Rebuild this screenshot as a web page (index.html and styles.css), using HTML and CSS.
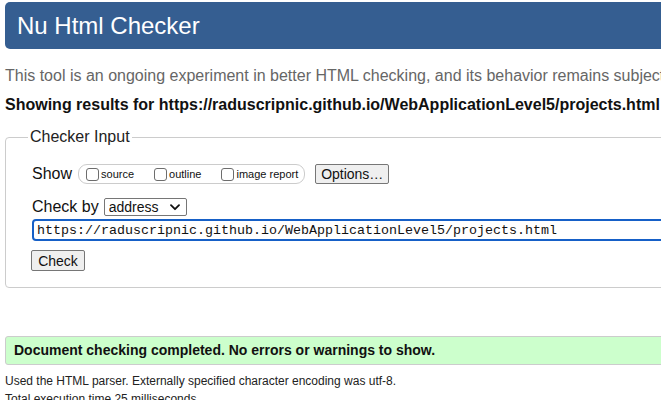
FILE: index.html
```html
<!DOCTYPE html>
<html lang="en">
<head>
<meta charset="utf-8">
<title>Nu Html Checker</title>
<link rel="stylesheet" href="styles.css">
</head>
<body>
<div class="page">
  <header class="banner"><h1 class="title">Nu Html Checker</h1></header>
  <p class="intro">This tool is an ongoing experiment in better HTML checking, and its behavior remains subject to change</p>
  <p class="results">Showing results for https://raduscripnic.github.io/WebApplicationLevel5/projects.html</p>
  <form class="form">
    <fieldset class="fs">
      <legend class="legend">Checker Input</legend>
      <div class="rows">
        <div class="row">
          <span class="lbl">Show</span>
          <span class="pill">
            <label class="opt"><input type="checkbox" class="cb">source</label>
            <label class="opt"><input type="checkbox" class="cb">outline</label>
            <label class="opt"><input type="checkbox" class="cb">image report</label>
          </span>
          <button type="button" class="btn btn-opt">Options…</button>
        </div>
        <div class="row row-by">
          <span class="lbl">Check by</span>
          <span class="sel">
            <select class="sel-in"><option>address</option></select>
            <svg class="chev" width="10" height="7" viewBox="0 0 10 7"><path d="M1 1.2 L5 5.2 L9 1.2" fill="none" stroke="#111" stroke-width="1.8" stroke-linecap="round" stroke-linejoin="round"/></svg>
          </span>
        </div>
        <div class="row row-url">
          <input class="url" type="text" value="https://raduscripnic.github.io/WebApplicationLevel5/projects.html">
        </div>
        <div class="row row-check">
          <button type="button" class="btn btn-check">Check</button>
        </div>
      </div>
    </fieldset>
  </form>
  <p class="success">Document checking completed. No errors or warnings to show.</p>
  <p class="stats">Used the HTML parser. Externally specified character encoding was utf-8.</p>
  <p class="stats stats2">Total execution time 25 milliseconds.</p>
</div>
</body>
</html>
```
FILE: styles.css
```css
html { overflow: hidden; }
body {
  margin: 0;
  font-family: "Liberation Sans", Arial, Helvetica, sans-serif;
  color: #111;
  background: #fff;
}
.page {
  width: 760px;
  padding: 2px 0 0 5px;
}
.banner {
  height: 47px;
  background: #355e91;
  border-radius: 5px 0 0 5px;
  padding-left: 12px;
}
.title {
  margin: 0;
  font-size: 24px;
  font-weight: normal;
  line-height: 47px;
  color: #fff;
}
.intro {
  margin: 17px 0 0;
  font-size: 16px;
  line-height: 20px;
  color: #666;
  white-space: nowrap;
}
.results {
  margin: 9px 0 0;
  font-size: 16px;
  line-height: 20px;
  font-weight: bold;
  white-space: nowrap;
}
.form { margin: 12px 0 0; }
.fs {
  margin: 0;
  border: 1px solid #ccc;
  border-radius: 4px;
  padding: 0 0 16px 26px;
}
.legend {
  margin-left: -4px;
  padding: 0 2px;
  font-size: 16px;
  line-height: 20px;
  color: #222;
}
.rows {
  display: flex;
  flex-direction: column;
  padding-top: 17px;
}
.row {
  display: flex;
  align-items: center;
}
.lbl {
  font-size: 16px;
  line-height: 20px;
  color: #111;
}
.pill {
  display: inline-flex;
  align-items: center;
  gap: 17px;
  height: 18px;
  margin-left: 6px;
  padding: 0 6px 0 4px;
  border: 1px solid #ccc;
  border-radius: 9px;
}
.opt {
  display: inline-flex;
  align-items: center;
  font-size: 11px;
  color: #111;
}
.cb {
  -webkit-appearance: none;
  appearance: none;
  width: 13px;
  height: 13px;
  margin: 0 2px 0 3px;
  border: 1px solid #6d6d6d;
  border-radius: 3px;
  background: #fff;
}
.btn {
  font-family: "Liberation Sans", Arial, sans-serif;
  font-size: 14px;
  color: #111;
  background: #efefef;
  border: 1px solid #767676;
  border-radius: 2px;
  padding: 0;
}
.btn-opt {
  width: 74px;
  height: 20px;
  margin-left: 10px;
}
.row-by { margin-top: 13px; }
.sel {
  display: inline-flex;
  align-items: center;
  width: 83px;
  height: 18px;
  box-sizing: border-box;
  margin-left: 5px;
  border: 1px solid #767676;
  border-radius: 2px;
  background: #fff;
}
.sel-in {
  -webkit-appearance: none;
  appearance: none;
  flex: 1;
  border: 0;
  background: transparent;
  font-family: "Liberation Sans", Arial, sans-serif;
  font-size: 14px;
  color: #111;
  padding: 0 0 0 4px;
  height: 16px;
  line-height: 16px;
  outline: none;
}
.chev { margin-right: 6px; flex: none; }
.row-url { margin-top: 2px; }
.url {
  width: 700px;
  height: 22px;
  box-sizing: border-box;
  border: 2px solid #1660c7;
  border-radius: 4px;
  padding: 0 3px;
  font-family: "Liberation Mono", "Courier New", monospace;
  font-size: 13.33px;
  color: #111;
  outline: none;
}
.row-check { margin-top: 9px; }
.btn-check {
  width: 54px;
  height: 21px;
  margin-left: -1px;
}
.success {
  margin: 48px 0 0;
  height: 27px;
  line-height: 27px;
  padding-left: 8px;
  background: #ccffcc;
  border: 1px solid #ccc;
  border-radius: 3px 0 0 3px;
  font-size: 14px;
  font-weight: bold;
  color: #111;
  white-space: nowrap;
}
.stats {
  margin: 8px 0 0;
  font-size: 12px;
  line-height: 16px;
  color: #222;
}
.stats2 { margin-top: 2px; }
```
